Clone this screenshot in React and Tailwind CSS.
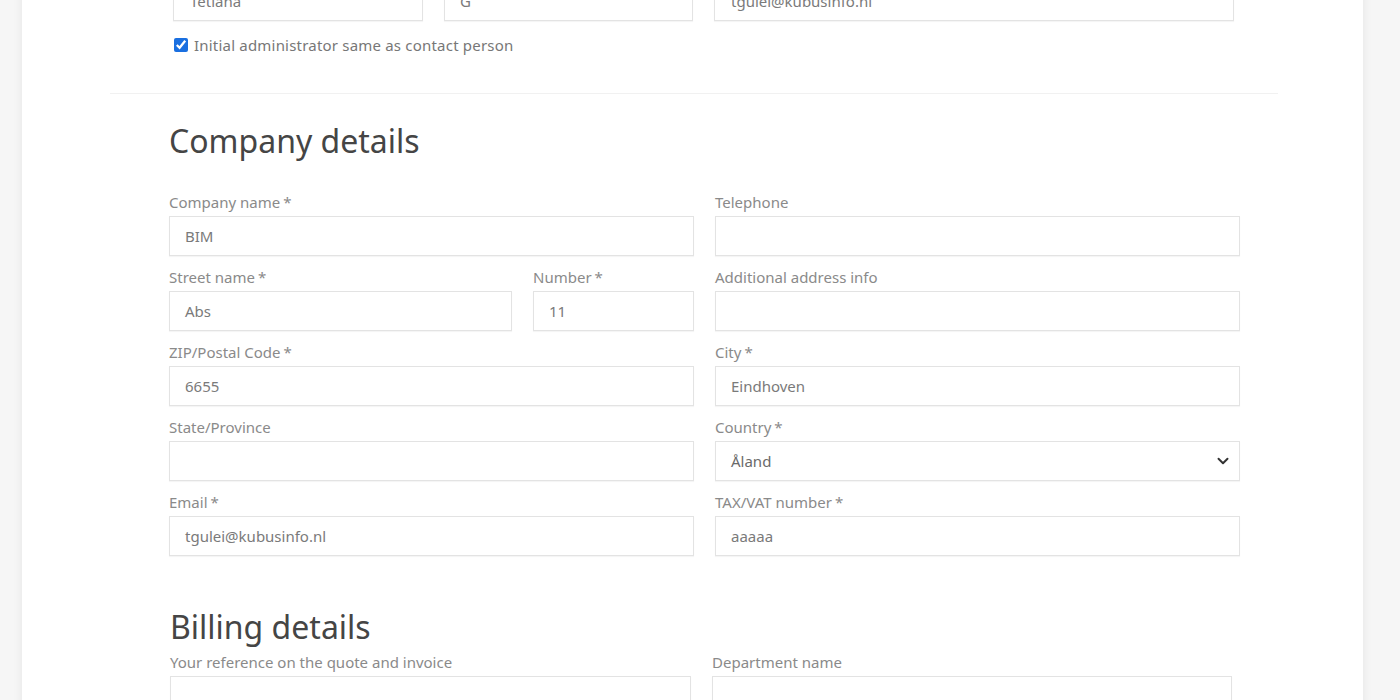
import { ChevronDown } from 'lucide-react';

// Single labelled text field
function Field({ label, required, value }) {
  return (
    <div>
      <label className="block h-5 mb-1 text-[15px] leading-5 text-[#8a8a8a]">
        {label}
        {required && <span className="ml-[3px]">*</span>}
      </label>
      <div className="h-10 border border-[#e3e3e3] bg-white shadow-[0_1px_1px_rgba(0,0,0,0.04)] px-[15px] flex items-center text-[15px] text-[#7a7a7a]">
        {value}
      </div>
    </div>
  );
}

function SelectField({ label, required, value }) {
  return (
    <div>
      <label className="block h-5 mb-1 text-[15px] leading-5 text-[#8a8a8a]">
        {label}
        {required && <span className="ml-[3px]">*</span>}
      </label>
      <div className="h-10 border border-[#e3e3e3] bg-white shadow-[0_1px_1px_rgba(0,0,0,0.04)] pl-[15px] pr-[7px] flex items-center justify-between text-[15px] text-[#6a6a6a]">
        <span>{value}</span>
        <ChevronDown size={18} strokeWidth={2.6} className="text-[#333]" />
      </div>
    </div>
  );
}

export default function App() {
  return (
    <div
      className="w-[1400px] h-[700px] overflow-hidden bg-[#f6f6f6]"
      style={{ fontFamily: '"Noto Sans", "Open Sans", sans-serif' }}
    >
      <div className="ml-[22px] w-[1341px] h-[760px] bg-white shadow-[0_0_10px_rgba(0,0,0,0.07)]">
        {/* Contact person (tail end) */}
        <div className="pl-[151px] -mt-[19px]">
          <div className="grid grid-cols-[250px_249px_520px] gap-x-[21px] w-[1061px]">
            <div className="h-10 border border-[#e3e3e3] shadow-[0_1px_1px_rgba(0,0,0,0.04)] px-[16px] flex items-center text-[15px] text-[#7a7a7a]">
              Tetiana
            </div>
            <div className="h-10 border border-[#e3e3e3] shadow-[0_1px_1px_rgba(0,0,0,0.04)] px-[15px] flex items-center text-[15px] text-[#7a7a7a]">
              G
            </div>
            <div className="h-10 border border-[#e3e3e3] shadow-[0_1px_1px_rgba(0,0,0,0.04)] px-[16px] flex items-center text-[15px] text-[#7a7a7a]">
              tgulei@kubusinfo.nl
            </div>
          </div>
          <label className="flex items-center gap-[6px] mt-[14px] h-5 text-[15px] tracking-[0.2px] text-[#777]">
            <input type="checkbox" defaultChecked className="w-[14px] h-[14px] m-0 ml-[1px] accent-[#1a6fe0]" />
            Initial administrator same as contact person
          </label>
        </div>

        <div className="ml-[88px] w-[1168px] mt-[38px] border-t border-[#f1f1f1]" />

        {/* Company details */}
        <div className="pl-[147px]">
          <h2 className="mt-[27px] text-[32px] leading-[40px] text-[#454545]">Company details</h2>
          <div className="mt-[31px] grid grid-cols-2 gap-x-[21px] gap-y-[11px] w-[1071px]">
            <Field label="Company name" required value="BIM" />
            <Field label="Telephone" value="" />
            <div className="grid grid-cols-[343px_161px] gap-x-[21px]">
              <Field label="Street name" required value="Abs" />
              <Field label="Number" required value="11" />
            </div>
            <Field label="Additional address info" value="" />
            <Field label="ZIP/Postal Code" required value="6655" />
            <Field label="City" required value="Eindhoven" />
            <Field label="State/Province" value="" />
            <SelectField label="Country" required value="Åland" />
            <Field label="Email" required value="tgulei@kubusinfo.nl" />
            <Field label="TAX/VAT number" required value="aaaaa" />
          </div>
        </div>

        {/* Billing details */}
        <div className="pl-[148px]">
          <h2 className="mt-[51px] text-[32px] leading-[40px] text-[#454545]">Billing details</h2>
          <div className="mt-[5px] grid grid-cols-[521px_520px] gap-x-[21px]">
            <Field label="Your reference on the quote and invoice" value="" />
            <Field label="Department name" value="" />
          </div>
        </div>
      </div>
    </div>
  );
}
